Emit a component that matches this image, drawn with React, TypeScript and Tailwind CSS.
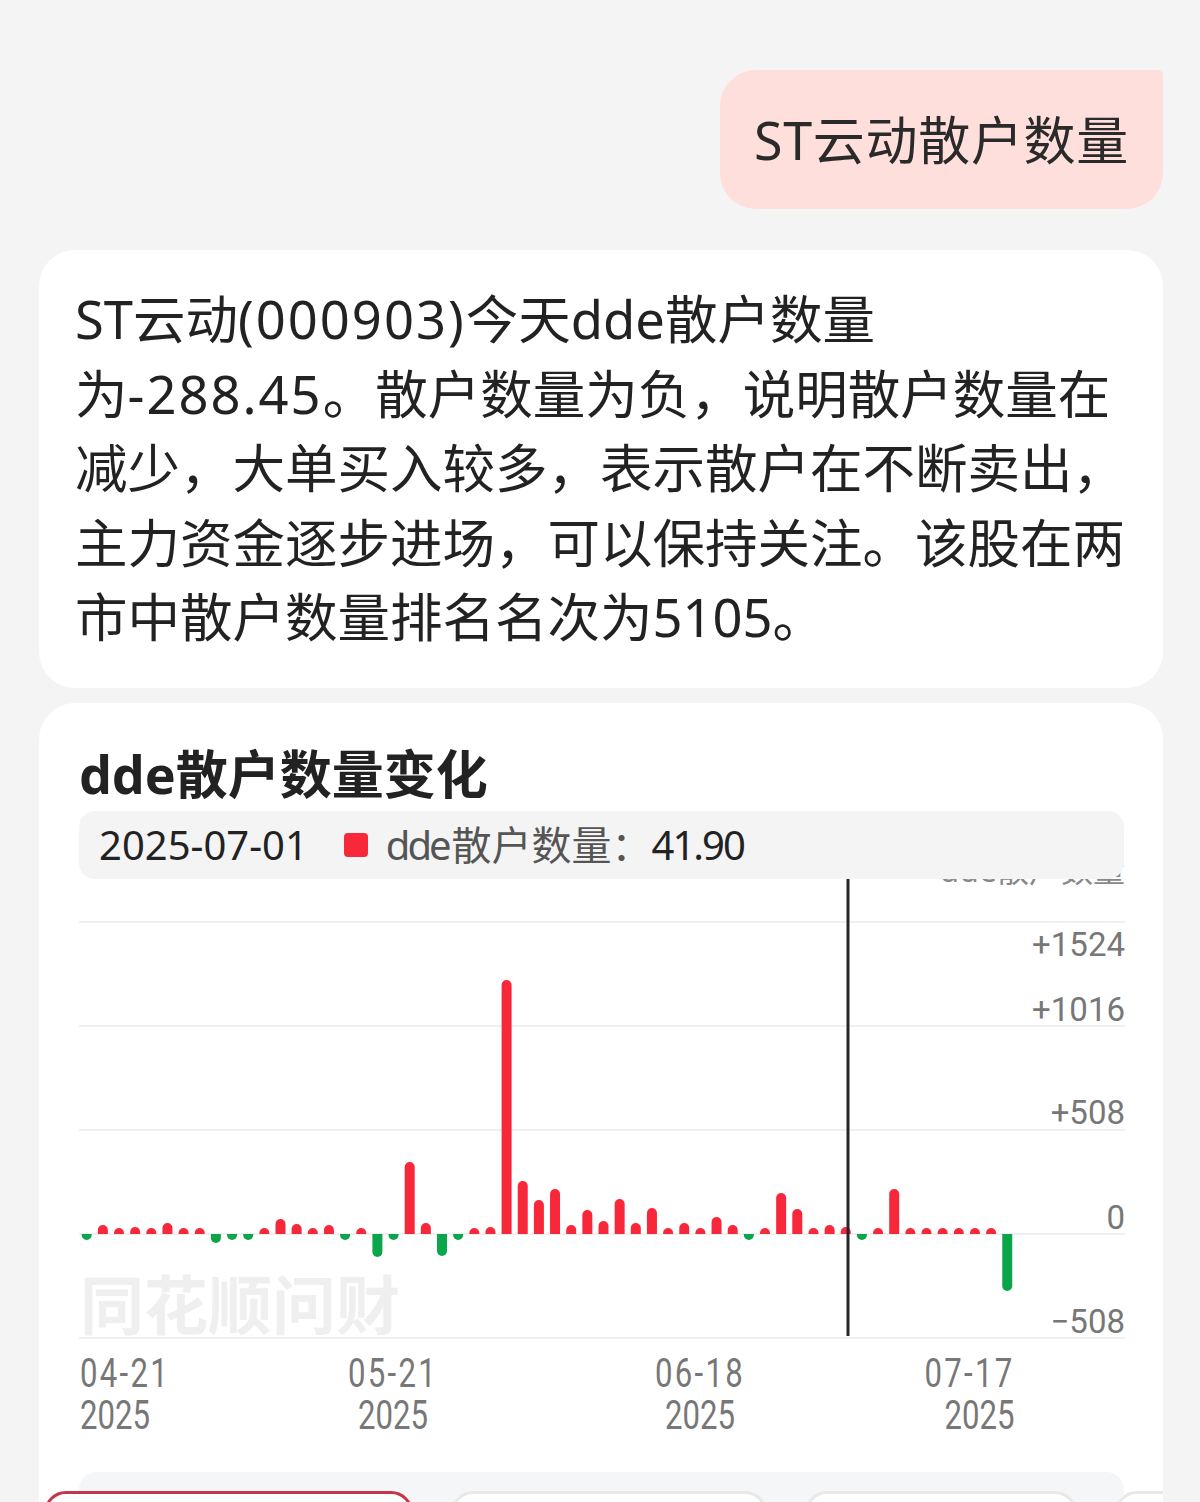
import React from "react";

const H: number[] = [
  -6, 9, 6, 7, 6, 11, 6, 6, -9, -6, -6, 6, 15, 10, 6, 9, -6, 6, -23, -6,
  72, 11, -22, -6, 6, 7, 254, 53, 34, 45, 9, 24, 13, 35, 11, 26, 6, 11, 6, 17,
  9, -6, 6, 41, 25, 6, 9, 7, -6, 6, 45, 6, 6, 6, 6, 6, 6, -57,
];

const BASE = 355;

function barPath(i: number, h: number) {
  const cx = 7.7 + 16.15 * i;
  const l = (cx - 5).toFixed(2);
  const r = (cx + 5).toFixed(2);
  if (h >= 0) {
    const t = BASE - h + 5;
    return `M${l},${BASE} V${t} A5,5 0 0 1 ${r},${t} V${BASE} Z`;
  }
  const b = BASE - h - 5;
  return `M${l},${BASE} V${b} A5,5 0 0 0 ${r},${b} V${BASE} Z`;
}

function Chart() {
  const grid = [43, 147, 251, 355, 459];
  return (
    <div className="relative h-[460px] w-[1046px]">
      <div className="absolute right-0 top-[-25px] text-[32px] leading-[32px] text-[#888] whitespace-nowrap">
        dde散户数量
      </div>
      <div className="absolute left-[1px] top-[394px] text-[64px] leading-[64px] font-bold text-[#efefef] whitespace-nowrap">
        同花顺问财
      </div>
      <svg className="absolute inset-0" width="1046" height="460" viewBox="0 0 1046 460">
        {grid.map((y) => (
          <line key={y} x1="0" x2="1046" y1={y} y2={y} stroke="#f0f0f0" strokeWidth="2" />
        ))}
        {H.map((h, i) => (
          <path key={i} d={barPath(i, h)} fill={h >= 0 ? "#f8283b" : "#0ba64b"} />
        ))}
        <line x1="769" x2="769" y1="0" y2="457" stroke="#262626" strokeWidth="3" />
      </svg>
      <div className="absolute right-0 top-[49px] text-[33px] leading-[33px] text-[#777] font-[Roboto,sans-serif]">+1524</div>
      <div className="absolute right-0 top-[114px] text-[33px] leading-[33px] text-[#777] font-[Roboto,sans-serif]">+1016</div>
      <div className="absolute right-0 top-[217px] text-[33px] leading-[33px] text-[#777] font-[Roboto,sans-serif]">+508</div>
      <div className="absolute right-0 top-[322px] text-[33px] leading-[33px] text-[#777] font-[Roboto,sans-serif]">0</div>
      <div className="absolute right-0 top-[426px] text-[33px] leading-[33px] text-[#777] font-[Roboto,sans-serif]">−508</div>
    </div>
  );
}

function Label({ d }: { d: string }) {
  return (
    <>
      <span className="tracking-[3px]">{d}</span>
      <span>2025</span>
    </>
  );
}

function XLabels() {
  const cls = "flex flex-col text-[41px] leading-[42px] text-[#777] font-[Roboto,sans-serif] scale-x-[0.76]";
  return (
    <div className="relative h-[133px] w-[1046px]">
      <div className={`absolute left-[1px] top-[13px] items-start origin-left ${cls}`}>
        <Label d="04-21" />
      </div>
      <div className={`absolute left-[314px] top-[13px] -translate-x-1/2 items-center origin-center ${cls}`}>
        <Label d="05-21" />
      </div>
      <div className={`absolute left-[621px] top-[13px] -translate-x-1/2 items-center origin-center ${cls}`}>
        <Label d="06-18" />
      </div>
      <div className={`absolute right-[110px] top-[13px] items-end origin-right ${cls}`}>
        <Label d="07-17" />
      </div>
    </div>
  );
}

export default function App() {
  return (
    <div
      className="w-[1200px] h-[1502px] overflow-hidden bg-[#f4f4f4] text-[#222]"
      style={{ fontFamily: '"Noto Sans", "Noto Sans CJK SC", sans-serif' }}
    >
      <div className="flex justify-end pt-[70px] pr-[37px]">
        <div className="flex h-[139px] items-center rounded-[36px] rounded-tr-[5px] bg-[#ffdfdc] pl-[34px] pr-[34px] text-[52px] leading-[60px] tracking-[0.7px] text-[#2a2a2a] whitespace-nowrap">
          ST云动散户数量
        </div>
      </div>

      <div className="ml-[39px] mr-[37px] mt-[41px] rounded-[36px] bg-white pl-[36px] pr-[10px] pt-[32px] pb-[33px] text-[52.5px] leading-[74.5px] text-[#222]">
        <div className="whitespace-nowrap">
          ST云动<span className="tracking-[2px]">(000903)</span>今天dde散户数量
        </div>
        <div className="whitespace-nowrap">
          为<span className="tracking-[2px]">-288.45</span>。散户数量为负，说明散户数量在
        </div>
        <div className="whitespace-nowrap">减少，大单买入较多，表示散户在不断卖出，</div>
        <div className="whitespace-nowrap">主力资金逐步进场，可以保持关注。该股在两</div>
        <div className="whitespace-nowrap">市中散户数量排名名次为5105。</div>
      </div>

      <div className="ml-[39px] mr-[37px] mt-[15px] h-[900px] overflow-hidden rounded-[36px] bg-white px-[40px] pt-[41px]">
        <div className="text-[52px] leading-[60px] font-bold text-[#222] whitespace-nowrap">dde散户数量变化</div>
        <div className="relative z-10 mt-[7px] flex h-[68px] w-[1045px] items-center rounded-[16px] bg-[#f4f4f4] pl-[20px] text-[40px] whitespace-nowrap">
          <span className="text-[#222]">2025-07-01</span>
          <span className="ml-[36px] h-[24px] w-[24px] rounded-[4px] bg-[#f8283b]" />
          <span className="ml-[18px] text-[#555]">
            <span className="tracking-[-3px]">dde</span>
            <span className="ml-[3px]">散户数量</span>：
          </span>
          <span className="tracking-[-2px] text-[#222]">41.90</span>
        </div>
        <Chart />
        <XLabels />
        <div className="relative h-[80px] w-[1045px] rounded-t-[18px] bg-[#f5f6f8]">
          <div className="absolute left-[-35px] top-[19px] flex gap-[38px]">
            <div className="h-[60px] w-[369px] shrink-0 rounded-[22px] border-[3px] border-[#c8354b] bg-white" />
            <div className="h-[60px] w-[316px] shrink-0 rounded-[22px] border-[3px] border-[#e8e8e8] bg-white" />
            <div className="h-[60px] w-[272px] shrink-0 rounded-[22px] border-[3px] border-[#e8e8e8] bg-white" />
            <div className="h-[60px] w-[200px] shrink-0 rounded-[22px] border-[3px] border-[#e8e8e8] bg-white" />
          </div>
        </div>
      </div>
    </div>
  );
}
